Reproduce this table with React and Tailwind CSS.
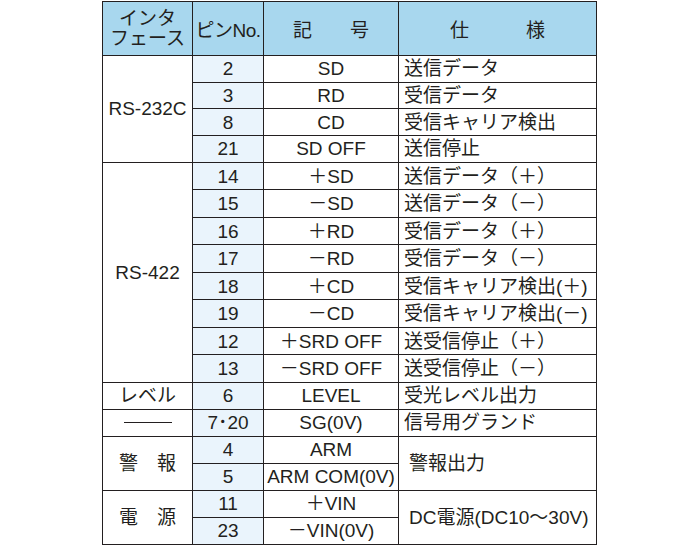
const groups = [
  {
    label: 'RS-232C',
    h: 'h-[26.7px]',
    rows: [
      ['2', 'SD', '送信データ'],
      ['3', 'RD', '受信データ'],
      ['8', 'CD', '受信キャリア検出'],
      ['21', 'SD OFF', '送信停止'],
    ],
  },
  {
    label: 'RS-422',
    h: 'h-[27.5px]',
    rows: [
      ['14', '＋SD', '送信データ（＋）'],
      ['15', '－SD', '送信データ（－）'],
      ['16', '＋RD', '受信データ（＋）'],
      ['17', '－RD', '受信データ（－）'],
      ['18', '＋CD', '受信キャリア検出(＋)'],
      ['19', '－CD', '受信キャリア検出(－)'],
      ['12', '＋SRD OFF', '送受信停止（＋）'],
      ['13', '－SRD OFF', '送受信停止（－）'],
    ],
  },
  { label: 'レベル', h: 'h-[27px]', rows: [['6', 'LEVEL', '受光レベル出力']] },
  { label: null, h: 'h-[27px]', rows: [['7･20', 'SG(0V)', '信号用グランド']] },
  {
    label: '警　報',
    h: 'h-[27px]',
    spec: '警報出力',
    rows: [
      ['4', 'ARM'],
      ['5', 'ARM COM(0V)'],
    ],
  },
  {
    label: '電　源',
    h: 'h-[27px]',
    spec: 'DC電源(DC10～30V)',
    rows: [
      ['11', '＋VIN'],
      ['23', '－VIN(0V)'],
    ],
  },
];

const cell = 'border border-[#231f20] p-0 leading-none';

export default function App() {
  return (
    <div className="min-h-[547px] w-[700px] bg-white pl-[102px] pt-px">
      <table
        className="w-[495px] table-fixed border-collapse border border-[#231f20] text-[19px] text-[#231f20]"
        style={{ fontFamily: '"Liberation Sans", "Noto Sans CJK JP", sans-serif' }}
      >
        <colgroup>
          <col className="w-[90px]" />
          <col className="w-[71px]" />
          <col className="w-[135px]" />
          <col className="w-[198px]" />
        </colgroup>
        <thead>
          <tr className="bg-[#a8d7ee]">
            <th className="h-[54px] border border-[#231f20] p-0 text-center font-normal leading-[20px]">
              インタ
              <br />
              フェース
            </th>
            <th className="border border-[#231f20] p-0 pt-[6px] text-center font-normal tracking-[-0.5px]">ピンNo.</th>
            <th className="border border-[#231f20] p-0 pt-[6px] text-center font-normal">記　　号</th>
            <th className="border border-[#231f20] p-0 pt-[6px] text-center font-normal">仕　　　様</th>
          </tr>
        </thead>
        <tbody>
          {groups.map((g) =>
            g.rows.map((r, i) => (
              <tr key={g.label + r[0]} className={g.h}>
                {i === 0 && (
                  <td rowSpan={g.rows.length} className={`${cell} text-center`}>
                    {g.label ? g.label : <div className="mx-auto h-px w-[48px] bg-[#231f20]" />}
                  </td>
                )}
                <td className={`${cell} bg-[#eaf4fc] text-center`}>{r[0]}</td>
                <td className={`${cell} whitespace-nowrap text-center`}>{r[1]}</td>
                {r[2] ? (
                  <td className={`${cell} whitespace-nowrap pl-[5px] text-left`}>{r[2]}</td>
                ) : (
                  i === 0 && (
                    <td rowSpan={g.rows.length} className={`${cell} whitespace-nowrap pl-[10px] text-left`}>
                      {g.spec}
                    </td>
                  )
                )}
              </tr>
            ))
          )}
        </tbody>
      </table>
    </div>
  );
}
